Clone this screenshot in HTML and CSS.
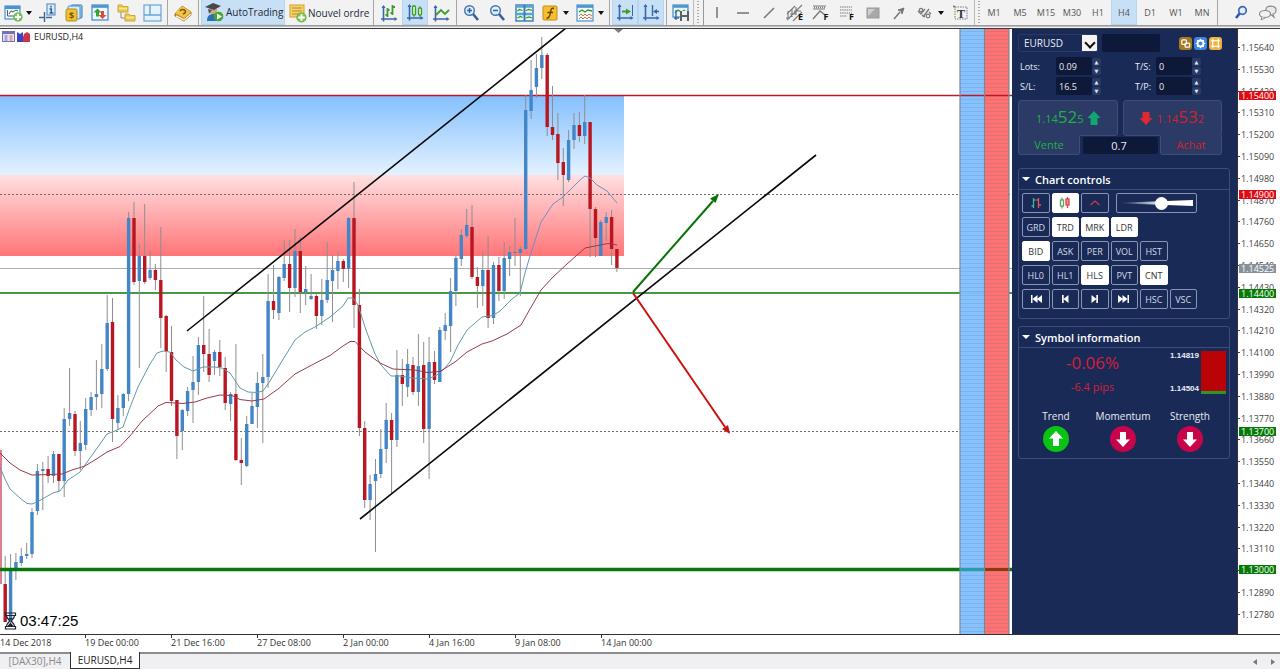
FILE: index.html
```html
<!DOCTYPE html>
<html lang="fr">
<head>
<meta charset="utf-8">
<title>EURUSD,H4</title>
<link rel="stylesheet" href="styles.css">
</head>
<body>
<svg class="defs" aria-hidden="true">
  <symbol id="plus" viewBox="0 0 10 10"><circle cx="5" cy="5" r="4.6" fill="#58a63a"/><circle cx="5" cy="5" r="4" fill="#7cc655"/><path d="M5 2v6M2 5h6" stroke="#fff" stroke-width="1.8"/></symbol>
  <symbol id="axes" viewBox="0 0 20 20"><path d="M4.500 3v15.500M2 16h15" stroke="#3a66ae" stroke-width="1.600" fill="none"/><path d="M2.500 5l2-3 2 3zM15.500 14l3 2-3 2z" fill="#3a66ae"/></symbol>
</svg>

<header class="toolbar">
  <button class="tool menu" aria-label="Nouveau graphique"><svg viewBox="0 0 20 20"><rect x="2" y="3" width="15" height="13" fill="#eff7fd" stroke="#4a93d0" stroke-width="1.200"/><path d="M2 4.500h15" stroke="#4a93d0" stroke-width="3"/><path d="M4.500 7v6h10M6 11l2-3 2 1 3-2 2 1" fill="none" stroke="#555f68"/><use href="#plus" x="10" y="9" width="10" height="10"/></svg></button>
  <button class="tool" aria-label="Réticule"><svg viewBox="0 0 20 20"><path d="M6.500 9v10M1 14.500h5M8 14.500h6" stroke="#3f6496" stroke-width="1.400"/><rect x="9" y="1" width="8" height="11" fill="#d8ecfa" stroke="#4f82bf"/><path d="M11.500 6h1.800v4M11.500 10h4M13 2.800v1.700" fill="none" stroke="#2c5f9f" stroke-width="1.500"/></svg></button>
  <button class="tool" aria-label="Cotations"><svg viewBox="0 0 20 20"><rect x="7" y="2" width="11" height="13" rx="1" fill="#9ed0f0" stroke="#337cba"/><rect x="4" y="3" width="12" height="13" rx="1" fill="#d5ecfa" stroke="#4b92cc"/><rect x="2" y="6" width="11" height="12" rx="1.500" fill="#eec033" stroke="#b48a1b"/><text x="7.500" y="15.500" text-anchor="middle" class="glyph coin">$</text></svg></button>
  <button class="tool" aria-label="Navigateur"><svg viewBox="0 0 20 20"><rect x="2" y="2" width="16" height="15" fill="#eff7fd" stroke="#4a93d0" stroke-width="1.300"/><path d="M2 3.500h16" stroke="#4a93d0" stroke-width="2.600"/><path d="M7.500 5.500l4 4H9v4H6v-4H3.500z" fill="#39a431"/><path d="M12.500 16l-4-4H11V8h3v4h2.500z" fill="#df4b36"/></svg></button>
  <button class="tool" aria-label="Dossiers"><svg viewBox="0 0 20 20"><path d="M5 9v6h5" stroke="#888" fill="none"/><path d="M2 2h4l1 1.500h5V9H2zM9 11h4l1 1.500h5V18H9z" fill="#eac84f" stroke="#c9a644"/><path d="M3 5.500h8M10 14.500h8" stroke="#fae98d" stroke-width="1.500"/></svg></button>
  <button class="tool" aria-label="Terminal"><svg viewBox="0 0 20 20"><rect x="2" y="2" width="17" height="16" fill="#e4f2fb" stroke="#69a5d5" stroke-width="1.200"/><path d="M2 12h17M8 2v10" stroke="#69a5d5" stroke-width="1.500"/></svg></button>
  <i class="sep"></i>
  <button class="tool" aria-label="Éditeur"><svg viewBox="0 0 20 20"><path d="M2 11l7-8 9 6v3l-7 6-9-5z" fill="#c58d1a" stroke="#9b7220"/><path d="M2 10l7-7 9 6-7 6z" fill="#f0c34b"/><path d="M3 13l8 4 7-6" fill="none" stroke="#f6f0dd" stroke-width="1.400"/><path d="M7 8c2-3 7-1 5 2l-2 1" fill="none" stroke="#805908" stroke-width="1.600"/></svg></button>
  <i class="sep"></i>
  <button class="tool wide on auto"><svg viewBox="0 0 20 20"><path d="M3 19c0-6 3-7 7-7s5 2 5 7z" fill="#2d6fb5"/><circle cx="9" cy="8" r="4" fill="#d3a675"/><path d="M1 5l8-4 8 3-7 4z" fill="#444a50"/><path d="M4 7l1 5 3-4" fill="#555"/><circle cx="14.500" cy="14.500" r="4.800" fill="#41a72f"/><path d="M13 11.500l5 3-5 3z" fill="#fff"/></svg>AutoTrading</button>
  <button class="tool wide order"><svg viewBox="0 0 20 20"><rect x="2" y="2" width="14" height="12" fill="#f6d469" stroke="#d1a02b"/><path d="M4 5h10M4 8h10M4 11h7" stroke="#b4862d" stroke-width="1.200"/><use href="#plus" x="8" y="9" width="11" height="11"/></svg>Nouvel ordre</button>
  <i class="sep"></i>
  <button class="tool" aria-label="Barres"><svg viewBox="0 0 20 20"><use href="#axes"/><path d="M8.500 5v9M6.500 12h2M8.500 7h2M13.500 2v10M11.500 10h2M13.500 4h2.500" stroke="#3d9d2c" stroke-width="1.800"/></svg></button>
  <button class="tool on" aria-label="Chandeliers"><svg viewBox="0 0 20 20"><use href="#axes"/><path d="M9 3v12M15 4v11" stroke="#3d9d2c"/><rect x="7.500" y="4" width="3" height="9" rx="1" fill="#d8f3d0" stroke="#3d9d2c" stroke-width="1.300"/><rect x="13.500" y="6" width="3" height="7" rx="1" fill="#d8f3d0" stroke="#3d9d2c" stroke-width="1.300"/></svg></button>
  <button class="tool" aria-label="Ligne"><svg viewBox="0 0 20 20"><use href="#axes"/><path d="M5 12l5-5 4 4 4-4" fill="none" stroke="#3d9d2c" stroke-width="1.800"/></svg></button>
  <i class="sep"></i>
  <button class="tool" aria-label="Agrandir"><svg viewBox="0 0 20 20"><path d="M11 11l5 6" stroke="#3a5e9a" stroke-width="2.600"/><circle cx="7.500" cy="7.500" r="4.800" fill="#e0f0fb" stroke="#4474b5" stroke-width="1.400"/><path d="M5 7.500h5M7.500 5v5" stroke="#33609f" stroke-width="1.500"/></svg></button>
  <button class="tool" aria-label="Réduire"><svg viewBox="0 0 20 20"><path d="M11 11l5 6" stroke="#3a5e9a" stroke-width="2.600"/><circle cx="7.500" cy="7.500" r="4.800" fill="#e0f0fb" stroke="#4474b5" stroke-width="1.400"/><path d="M5 7.500h5" stroke="#33609f" stroke-width="1.500"/></svg></button>
  <button class="tool" aria-label="Mosaïque"><svg viewBox="0 0 20 20"><rect x="2" y="2" width="17" height="16" fill="#e8f7e9" stroke="#367db9" stroke-width="1.400"/><path d="M2 3.500h17M2 11h17" stroke="#5ba4db" stroke-width="2.600"/><path d="M10.500 2v16" stroke="#367db9" stroke-width="2"/><path d="M3.500 8l2-1.500 3 1M12 7.500l3-1 3 1M3.500 15l3-1.500 2 1M12 15l3-1 3 1" stroke="#38912c" stroke-width="1.200" fill="none"/></svg></button>
  <button class="tool menu" aria-label="Indicateurs"><svg viewBox="0 0 20 20"><rect x="3" y="3" width="14" height="14" rx="1" fill="#f5bf2f" stroke="#c58b19"/><path d="M14 5.500c-3-1-3 1-3.500 4S9 15.500 6.500 15M7.500 9.500h5.500" fill="none" stroke="#6b4306" stroke-width="1.400"/></svg></button>
  <button class="tool menu" aria-label="Modèles"><svg viewBox="0 0 20 20"><rect x="2" y="2" width="16" height="16" fill="#f2faf6" stroke="#4a93d0" stroke-width="1.200"/><path d="M2 3.500h16" stroke="#4a93d0" stroke-width="2.600"/><path d="M4 9l3-2 3 2 3-2 4 1" fill="none" stroke="#38912c" stroke-width="1.300"/><path d="M4 13l2-2 2 2 2-2 2 2 2-2 3 2M4 16l2-2 2 2 2-2 2 2 2-2 3 2" fill="none" stroke="#c56f5d"/></svg></button>
  <i class="sep"></i>
  <button class="tool on" aria-label="Défilement"><svg viewBox="0 0 20 20"><use href="#axes"/><path d="M17.500 3v11" stroke="#3a66ae"/><path d="M7 9.500h5" stroke="#3d9d2c" stroke-width="2"/><path d="M11 6.500l5 3-5 3z" fill="#3d9d2c"/></svg></button>
  <button class="tool on" aria-label="Décalage"><svg viewBox="0 0 20 20"><use href="#axes"/><path d="M11.500 3v11M14 9.500h4" stroke="#3a66ae" stroke-width="1.400"/><path d="M16 7l-4 2.500 4 2.500z" fill="#3a66ae"/></svg></button>
  <i class="sep"></i>
  <button class="tool slim" aria-label="Enregistrer"><svg viewBox="0 0 20 20"><rect x="2" y="2" width="15" height="12" fill="#e9f6f2" stroke="#4a93d0" stroke-width="1.300"/><path d="M2 3.500h15" stroke="#4a93d0" stroke-width="2.500"/><path d="M4 10l3-3 3 2 4-2" fill="none" stroke="#38912c" stroke-width="1.300"/><path d="M5 7v10M3 15h5" stroke="#3a66ae" stroke-width="1.400"/><path d="M9 8h9v10H9z" fill="#58626b"/><path d="M11 8h5v4h-5zM11 14h5v4h-5z" fill="#edf1f3"/></svg></button>
  <i class="grip"></i>
  <button class="tool gray" aria-label="Ligne verticale"><svg viewBox="0 0 20 20"><path d="M10 4v11" /></svg></button>
  <button class="tool gray" aria-label="Ligne horizontale"><svg viewBox="0 0 20 20"><path d="M4 10h12"/></svg></button>
  <button class="tool gray" aria-label="Ligne de tendance"><svg viewBox="0 0 20 20"><path d="M5 15L15 5"/></svg></button>
  <button class="tool gray" aria-label="Canal équidistant"><svg viewBox="0 0 20 20"><path d="M2 17L17 2M2 11l8-8M8 18l9-9M3 8v8M7 6v8M11 4v8M1 15h4M5 11h6M9 8h7" stroke-width="1.100"/><text x="15.500" y="17" text-anchor="middle" class="glyph">E</text></svg></button>
  <button class="tool gray" aria-label="Éventail de Fibonacci"><svg viewBox="0 0 20 20"><path d="M2 3h13M2 6h12" stroke-width="1.200"/><path d="M2 16l7-8 5 4" stroke-width="1.400"/><path d="M3 4.500h12" stroke-dasharray="1 1"/><text x="15" y="17" text-anchor="middle" class="glyph">F</text></svg></button>
  <button class="tool gray" aria-label="Retracement de Fibonacci"><svg viewBox="0 0 20 20"><path d="M3 4h12M3 7h12M3 10h12M3 13h7" stroke-width="1.200" stroke-dasharray="1.500 .7"/><text x="14.500" y="17" text-anchor="middle" class="glyph">F</text></svg></button>
  <button class="tool gray" aria-label="Rectangle"><svg viewBox="0 0 20 20"><rect x="4" y="5" width="12" height="10" fill="#a9a9a9" stroke="#999" stroke-width="1"/><path d="M5 6h7l-7 7z" fill="#cfcfcf" stroke="none"/></svg></button>
  <button class="tool gray" aria-label="Flèche"><svg viewBox="0 0 20 20"><path d="M5 16l6-7"/><path d="M9 7l6-2-2 6-1-3z" fill="#777" stroke-width="1"/></svg></button>
  <button class="tool gray menu" aria-label="Formes"><svg viewBox="0 0 20 20"><path d="M3 8l3 3 4-5M8 14l6-8" stroke-width="1.400"/><circle cx="6" cy="7" r="1.700" stroke-width="1.200"/><circle cx="13" cy="13" r="1.800" stroke-width="1.200"/><path d="M14 9l2 2M7 12l3 2" stroke-width="1.200"/></svg></button>
  <button class="tool gray" aria-label="Texte"><svg viewBox="0 0 20 20"><rect x="5" y="4" width="12" height="12" stroke-width="1" stroke-dasharray="1.500 1"/><text x="11" y="14.500" text-anchor="middle" class="glyph serif">T</text><circle cx="4" cy="3.500" r="1" stroke="none" fill="#666"/></svg></button>
  <i class="grip short"></i>
  <nav class="frames">
    <button class="tool">M1</button><button class="tool">M5</button><button class="tool">M15</button><button class="tool">M30</button><button class="tool">H1</button><button class="tool on">H4</button><button class="tool">D1</button><button class="tool">W1</button><button class="tool">MN</button>
  </nav>
  <i class="sep end"></i>
  <button class="tool last" aria-label="Rechercher"><svg viewBox="0 0 20 20"><path d="M9 10l-4 5" stroke="#2856b5" stroke-width="2.600"/><circle cx="11.500" cy="7.500" r="3.800" fill="#e4edfa" stroke="#3b67bd" stroke-width="1.700"/></svg></button>
  <button class="tool" aria-label="Messages"><svg viewBox="0 0 20 20"><path d="M9 6c0-4 10-4 10 1 0 3-2 4-3 4l1 3-4-3H9z" fill="#e9e9e9" stroke="#8b8b8b" stroke-width="1.200"/><ellipse cx="8" cy="11" rx="5.500" ry="3.500" fill="#f2f2f2" stroke="#8b8b8b" stroke-width="1.200"/><path d="M5 14l-1 3 4-2" fill="#f2f2f2" stroke="#8b8b8b"/></svg></button>
</header>

<main class="workspace">
  <section class="chart" aria-label="Graphique EURUSD H4">
    <svg class="plot" viewBox="0 29 1012 605" preserveAspectRatio="none">
      <defs>
        <linearGradient id="zoneBlue" x1="0" y1="0" x2="0" y2="1"><stop offset="0" stop-color="#84c0fe"/><stop offset="1" stop-color="#e4f2ff"/></linearGradient>
        <linearGradient id="zoneRed" x1="0" y1="0" x2="0" y2="1"><stop offset="0" stop-color="#ffe0e1"/><stop offset="1" stop-color="#ff7578"/></linearGradient>
        <pattern id="stripes" width="4" height="4" patternUnits="userSpaceOnUse"><path d="M0 3.500h4" stroke="#5b6b8c" stroke-opacity=".18"/></pattern>
      </defs>
      <rect x="0" y="96" width="624" height="79" fill="url(#zoneBlue)"/>
      <rect x="0" y="175" width="624" height="81" fill="url(#zoneRed)"/>
      <path d="M0 194.500h1012M0 431.500h1012" stroke="#7d6668" stroke-dasharray="2 2"/>
      <path d="M0 268.500h1012" stroke="#aab0b2"/>
      <path d="M0 293h1012" stroke="#0a740a" stroke-width="1.600"/>
      <path d="M0 95.500h1012" stroke="#bb1824" stroke-width="1.600"/>
      <path d="M1 450v134" stroke="#dc7f90" stroke-width="2"/>
      <g id="candles"></g>
      <path fill="none" stroke="#6299a8" d="M0 467L5 479 10 489 20 498 27 503.500 32 504 37 502 53 493 60 491 68 480 80 472 90 458 100 444 107 434 115 431 123 427 129 410 138 387 150 364 157 353 163 351 170 352 176 360 184 367 193 371 203 367 215 367 222 368 230 373 240 388 248 392 257 392.500 263 391 270 381 282 361 295 340 305 332 315 327 330 317 343 306 348 298 353 298 358 305 366 330 375 354 381 365 391 376 400 376 412 378 428 379 437 375 443 370 450 362 458 345 467 330 482 317 493 315.500 500 311 512 299 520 293 525 273"/>
      <path fill="none" stroke="#6d8fcd" d="M525 273L530 256 541 222 553 204 563 197 572 188 580 180 585 176 590 178 597 185 607 191 617 203"/>
      <path fill="none" stroke="#963c48" d="M0 453L10 463 20 470 32 475 50 474.500 62 474 72 470 85 466 98 458 107 452 120 446.500 130 436 142 421 158 406 166 402.500 183 403.500 195 402 207 398 220 395 232 395.500 240 399.500 252 401 264 399 278 389 295 374 310 366 330 355.500 343 346 350 341.500 355 341.500 365 352 380 363 393 369 415 370 427 372.500 440 371.500 455 362 467 352 482 344 492 341 507 334 521 325 530 309 541 290 553 277 567 264 585 248 595 246 608 243.500 617 245"/>
      <path d="M0 569.500h1012" stroke="#08780c" stroke-width="3.400"/>
      <path d="M187 331L566 28M360 519L816 155" stroke="#0a0a0a" stroke-width="1.600"/>
      <path d="M633 292l80-91" stroke="#067306" stroke-width="2"/><path d="M719 194l-3.500 9-5.500-4.500z" fill="#067306"/>
      <path d="M633 293l92 134" stroke="#cd1010" stroke-width="2"/><path d="M730 434l-8-5 6-4z" fill="#cd1010"/>
      <path d="M614 29h9l-4.500 4z" fill="#808080"/>
      <rect x="960" y="28" width="24" height="606" fill="#80c0ff" fill-opacity=".96"/>
      <rect x="985" y="28" width="24" height="606" fill="#ff7272"/>
      <rect x="960" y="28" width="49" height="606" fill="url(#stripes)"/>
      <path d="M960 95.500h49" stroke="#bb1824" stroke-width="1.600"/>
      <path d="M960 569.500h24" stroke="#25a0aa" stroke-width="3"/><path d="M985 569.500h24" stroke="#8c3a0c" stroke-width="3"/>
      <path d="M960 28v606M984.500 28v606M1009 28v606" stroke="#7a8796" stroke-width="1.200"/>
    </svg>
    <h1 class="caption">
      <svg viewBox="0 0 28 12"><rect x=".5" y=".5" width="12" height="10" fill="#e7e2f2" stroke="#7272b4"/><path d="M1 2h11" stroke="#7272b4" stroke-width="2"/><path d="M2.500 5h3M2.500 7h3M2.500 9h3" stroke="#596dc7"/><path d="M7.500 5h3M7.500 7h3M7.500 9h3" stroke="#dc655f"/><path d="M15 1l3 2 3-2v10h-6z" fill="#3a42c6"/><path d="M22 3l3-2 3 2v8h-7V6z" fill="#cf3444"/></svg>
      EURUSD,H4
    </h1>
    <div class="timer">
      <svg viewBox="0 0 12 18"><path d="M1 1h10v2.500H1zM1 14.500h10V17H1zM2 3.500c0 3 3 4 3 5.500s-3 2-3 5.500M10 3.500c0 3-3 4-3 5.500s3 2 3 5.500" fill="none" stroke="#1c2230" stroke-width="1.200"/><path d="M3 14l3-3.500L9 14zM4 6h4L6 8z" fill="#1c2230"/></svg>
      <time>03:47:25</time>
    </div>
  </section>

  <aside class="panel">
    <form class="ticket">
      <div class="line first">
        <select class="symbol" aria-label="Symbole"><option>EURUSD</option></select>
        <input class="field search" aria-label="Commentaire">
        <div class="badges">
          <button type="button" class="badge brown" aria-label="Copier"><svg viewBox="0 0 14 14"><rect x="3" y="3" width="5" height="5" rx="1"/><rect x="6.500" y="6.500" width="5" height="4.500" rx="1"/></svg></button>
          <button type="button" class="badge blue" aria-label="Réglages"><svg viewBox="0 0 14 14"><circle cx="7" cy="7" r="3.200" stroke-width="2"/><path d="M7 1.800v2M7 10.200v2M1.800 7h2M10.200 7h2M3.300 3.300l1.200 1.200M9.500 9.500l1.200 1.200M3.300 10.700l1.200-1.200M9.500 4.500l1.200-1.200"/></svg></button>
          <button type="button" class="badge amber" aria-label="Agrandir"><svg viewBox="0 0 14 14"><rect x="4" y="4" width="6" height="6"/><path d="M4 2v2H2M10 2v2h2M4 12v-2H2M10 12v-2h2" stroke-width="1.200"/></svg></button>
        </div>
      </div>
      <div class="line">
        <label for="lots">Lots:</label><input class="field" id="lots" value="0.09"><span class="spin"><button type="button" aria-label="Lots plus">▲</button><button type="button" aria-label="Lots moins">▼</button></span>
        <label for="ts" class="second">T/S:</label><input class="field" id="ts" value="0"><span class="spin"><button type="button" aria-label="T/S plus">▲</button><button type="button" aria-label="T/S moins">▼</button></span>
      </div>
      <div class="line">
        <label for="sl">S/L:</label><input class="field" id="sl" value="16.5"><span class="spin"><button type="button" aria-label="S/L plus">▲</button><button type="button" aria-label="S/L moins">▼</button></span>
        <label for="tp" class="second">T/P:</label><input class="field" id="tp" value="0"><span class="spin"><button type="button" aria-label="T/P plus">▲</button><button type="button" aria-label="T/P moins">▼</button></span>
      </div>
      <div class="deal">
        <button type="button" class="side sell"><span class="quote"><span class="price"><small>1.14</small>52<small>5</small></span><svg viewBox="0 0 12 14"><path d="M6 0l6.500 7H9.500V14h-7V7H-.5z"/></svg></span><span class="verb">Vente</span></button>
        <button type="button" class="side buy"><span class="quote"><svg viewBox="0 0 12 14"><path d="M6 14L-.5 7h3V1h7v6h3z"/></svg><span class="price"><small>1.14</small>53<small>2</small></span></span><span class="verb">Achat</span></button>
        <input class="field spread" aria-label="Spread" value="0.7">
      </div>
    </form>

    <section class="card">
      <h2>Chart controls</h2>
      <div class="keys">
        <button aria-label="Barres"><svg viewBox="0 0 14 14"><path d="M4.500 2v10M2.500 10h2M4.500 4h2" stroke="#45b28b"/><path d="M9.500 2v10M7.500 4h2M9.500 9h2.500" stroke="#e0565b"/></svg></button>
        <button class="lit" aria-label="Chandeliers"><svg viewBox="0 0 14 14"><path d="M4 1.500v11" stroke="#58a565"/><rect x="2.500" y="4" width="3" height="6" fill="#fff" stroke="#58a565"/><path d="M9.500 1v11" stroke="#dd4448"/><rect x="8" y="3" width="3" height="6" fill="#f29a9a" stroke="#dd4448"/></svg></button>
        <button aria-label="Ligne"><svg viewBox="0 0 14 14"><path d="M2.500 9L7 5l4.500 4" stroke="#d23a45"/></svg></button>
        <label class="zoom"><input type="range" min="0" max="100" value="58" aria-label="Zoom"></label>
        <button class="row">GRD</button><button class="lit">TRD</button><button class="lit">MRK</button><button class="lit">LDR</button>
        <button class="row lit">BID</button><button>ASK</button><button>PER</button><button>VOL</button><button>HST</button>
        <button class="row">HL0</button><button>HL1</button><button class="lit">HLS</button><button>PVT</button><button class="lit">CNT</button>
        <button class="row" aria-label="Début"><svg viewBox="0 0 14 14"><path class="fill" d="M2 3h1.500v8H2zM8.500 3v8l-5-4zM13 3v8L8 7z"/></svg></button>
        <button aria-label="Précédent"><svg viewBox="0 0 14 14"><path class="fill" d="M4 3h1.700v8H4zM10.500 3v8L5.500 7z"/></svg></button>
        <button aria-label="Suivant"><svg viewBox="0 0 14 14"><path class="fill" d="M10 3H8.300v8H10zM3.500 3v8l5-4z"/></svg></button>
        <button aria-label="Fin"><svg viewBox="0 0 14 14"><path class="fill" d="M12 3h-1.500v8H12zM5.500 3v8l5-4zM1 3v8l5-4z"/></svg></button>
        <button>HSC</button><button>VSC</button>
      </div>
    </section>

    <section class="card info">
      <h2>Symbol information</h2>
      <div class="change">
        <div class="delta"><strong>-0.06%</strong><span>-6.4 pips</span></div>
        <div class="range"><span>1.14819</span><span>1.14504</span></div>
        <div class="gauge"></div>
      </div>
      <div class="signals">
        <figure><figcaption>Trend</figcaption><svg class="up" viewBox="0 0 26 26"><circle cx="13" cy="13" r="13"/><path d="M13 5l7 7.500h-4V20h-6v-7.500H6z"/></svg></figure>
        <figure><figcaption>Momentum</figcaption><svg viewBox="0 0 26 26"><circle cx="13" cy="13" r="13"/><path d="M13 21l-7-7.500h4V6h6v7.500h4z"/></svg></figure>
        <figure><figcaption>Strength</figcaption><svg viewBox="0 0 26 26"><circle cx="13" cy="13" r="13"/><path d="M13 21l-7-7.500h4V6h6v7.500h4z"/></svg></figure>
      </div>
    </section>
  </aside>

  <div class="scale"><ol id="prices"></ol></div>
</main>

<div class="dates"><span class="start">14 Dec 2018</span><span>19 Dec 00:00</span><span>21 Dec 16:00</span><span>27 Dec 08:00</span><span>2 Jan 00:00</span><span>4 Jan 16:00</span><span>9 Jan 08:00</span><span>14 Jan 00:00</span></div>

<footer class="tabs">
  <a href="#dax">[DAX30],H4</a><a href="#eurusd" class="current">EURUSD,H4</a>
  <div class="arrows"><button aria-label="Gauche"><svg viewBox="0 0 6 8"><path d="M5 1v6L1 4z"/></svg></button><button aria-label="Droite"><svg viewBox="0 0 6 8"><path d="M1 1v6l4-3z"/></svg></button></div>
</footer>
<script src="app.js"></script>
</body>
</html>
```

FILE: styles.css
```css
* { box-sizing: border-box; }
body {
  margin: 0;
  min-height: 100vh;
  display: flex;
  flex-direction: column;
  background: #fff;
  color: #222;
  font-family: "Open Sans", "Noto Sans", sans-serif;
  font-size: 10px;
}
button, input, select { font: inherit; color: inherit; margin: 0; padding: 0; border: 0; background: none; }
.defs { position: absolute; width: 0; height: 0; }

/* Toolbar */
.toolbar {
  display: flex;
  height: 29px;
  padding-bottom: 4px;
  background: linear-gradient(#f1f2f1 25px, #8b8d8f 25px, #c9cacb 27px, #f5f5f5 27px, #f5f5f5 28px, #3b3b3f 28px);
}
.tool {
  flex: none;
  width: 26px;
  display: flex;
  align-items: center;
  justify-content: center;
  white-space: nowrap;
}
.tool svg { width: 20px; height: 20px; flex: none; }
.tool.on { background: #c8e0f5; border: 1px solid #b4d5f0; border-top: 0; }
.tool.slim { width: 24px; }
.tool.menu { width: 35px; justify-content: flex-start; padding-left: 3px; }
.tool.menu::after { content: ""; margin-left: 3px; border: 3px solid transparent; border-top: 4px solid #111; border-bottom: 0; }
.tool.wide { justify-content: flex-start; gap: 2px; padding-left: 2px; color: #1d2a3a; }
.tool.auto { width: 84px; }
.tool.order { width: 86px; padding-left: 3px; gap: 0; }
.gray svg { fill: none; stroke: #7a7a7a; stroke-width: 1.6; }
.glyph { font: bold 9px "Open Sans", sans-serif; fill: #111; stroke: none; }
.coin { fill: #7a5505; }
.serif { font-family: "Liberation Serif", serif; font-size: 12px; fill: #333; }
.sep { flex: none; width: 5px; background: linear-gradient(90deg, transparent 2px, #a5a5a5 2px, #a5a5a5 3px, transparent 3px); }
.grip { flex: none; width: 11px; border-left: 1px solid #bbb; border-right: 1px solid #999; background: radial-gradient(circle, #aaa 1px, transparent 1px) 0 0 / 8px 3px; }
.grip.short { width: 7px; margin-left: 1px; border-right: 0; }
.frames { display: flex; color: #555; font-size: 9px; }
.sep.end { width: 3px; }
.tool.last { margin-left: auto; }

/* Chart */
.workspace { flex: 1; display: flex; min-height: 0; border-bottom: 1px solid #333; }
.chart { flex: 1; position: relative; min-width: 0; }
.plot { position: absolute; inset: 0; width: 100%; height: 100%; }
.candle line { stroke: #8e8e8e; }
.candle rect { fill: #4286c8; }
.candle.down rect { fill: #b81620; }
.caption { position: absolute; left: 2px; top: 2px; margin: 0; display: flex; align-items: center; gap: 4px; font-size: 9px; line-height: 12px; font-weight: 400; }
.caption svg { width: 28px; height: 12px; }
.timer { position: absolute; left: 4px; bottom: 4px; display: flex; align-items: center; gap: 3px; font: 15px/18px "Liberation Sans", sans-serif; color: #000; }
.timer svg { width: 13px; height: 18px; }

/* Price scale */
.scale { flex: none; width: 43px; position: relative; border-left: 1px solid #333; padding: 14px 0 15px; font: 9px/9px "Open Sans", sans-serif; color: #444; display: flex; }
.scale ol { list-style: none; margin: 0; padding: 0; flex: 1; display: flex; flex-direction: column; justify-content: space-between; }
.scale li { display: flex; align-items: center; }
.scale li::before { content: ""; width: 2px; height: 1px; margin-right: 1px; background: #444; }
.tag { position: absolute; left: 1px; width: 37px; padding-left: 2px; margin-top: -4px; color: #fff; }
.tag.red { background: #e00b12; }
.tag.green { background: #067a06; }
.tag.slate { background: #87919b; }

/* Side panel */
.panel { flex: none; width: 225px; padding: 4px 7px 4px 6px; background: #192a56; color: #e9edf5; }
.ticket { display: flex; flex-direction: column; gap: 2px; padding-right: 8px; font-size: 9px; }
.line { display: flex; align-items: center; height: 18px; }
.line.first { position: relative; height: 20px; margin-bottom: 2px; font-size: 10px; }
.line label { width: 38px; padding-left: 2px; }
.line label.second { width: 22px; margin-left: 33px; padding-left: 1px; }
.field { width: 36px; height: 18px; padding-left: 3px; background: #0e1838; border-radius: 2px; }
.symbol {
  width: 80px; height: 18px; padding-left: 5px; appearance: none; border: 1px solid #2b3a63; border-radius: 2px;
  background: linear-gradient(#f4f4f4, #f4f4f4) right / 15px 100% no-repeat;
}
.line.first::after { content: ""; position: absolute; left: 68px; top: 6px; width: 6px; height: 6px; border: solid #111; border-width: 0 2px 2px 0; transform: rotate(45deg); pointer-events: none; }
.search { width: 58px; margin-left: 4px; }
.badges { margin-left: auto; display: flex; gap: 2px; }
.badge { width: 13px; height: 13px; border-radius: 3px; display: flex; }
.badge svg { width: 13px; height: 13px; fill: none; stroke: #fff; stroke-width: 1.3; }
.brown { background: #a87a20; }
.blue { background: #3f83dd; }
.amber { background: #eeb23c; }
.spin { display: flex; flex-direction: column; gap: 1px; width: 9px; }
.spin button { height: 8px; background: #2a3a66; font: 5px/8px "DejaVu Sans", sans-serif; color: #dfe6f5; border-radius: 2px; }
.deal { display: grid; grid-template-columns: 1fr 1fr; gap: 5px; position: relative; margin-top: 3px; }
.side { display: flex; flex-direction: column; align-items: flex-start; }
.side.buy { align-items: flex-end; color: #d3202b; }
.sell { color: #1fb141; }
.quote { width: 100%; height: 36px; display: flex; align-items: center; justify-content: center; gap: 4px; background: #2b3b66; border: 1px solid #3d4d79; border-radius: 3px; }
.quote svg { width: 12px; height: 14px; overflow: visible; }
.sell svg { fill: #12a673; }
.buy svg { fill: #e02832; }
.price { font-size: 17px; line-height: 24px; }
.price small { font-size: 11px; }
.verb { width: 62px; height: 20px; margin-top: -1px; font-size: 11px; line-height: 18px; background: #2b3b66; border: 1px solid #3d4d79; border-top-color: #2b3b66; border-radius: 0 0 3px 3px; }
.spread { position: absolute; left: 65px; right: 64px; bottom: 1px; width: calc(100% - 129px); height: 17px; padding: 0 3px 0 0; text-align: center; font-size: 11px; }

.card { margin-top: 13px; border: 1px solid #3c4d7b; border-radius: 3px; padding-bottom: 9px; }
.card h2 { margin: 0; height: 21px; display: flex; align-items: center; gap: 5px; padding-left: 3px; border-bottom: 1px solid #3c4d7b; font-size: 11px; font-weight: 600; color: #fff; }
.card h2::before { content: ""; border: 4px solid transparent; border-top-color: #fff; border-bottom: 0; }
.keys { display: grid; grid-template-columns: repeat(6, 1fr); grid-auto-rows: 20px; gap: 4px 2px; width: 178px; padding: 3px 0 0 3px; }
.keys button { display: flex; align-items: center; justify-content: center; border: 1px solid #8995b4; border-radius: 2px; font-size: 9px; color: #d5dbe8; }
.keys .row { grid-column: 1; }
.keys .lit { background: #fff; border-color: #fff; color: #333; }
.keys svg { width: 14px; height: 14px; fill: none; stroke-width: 1.3; }
.keys .fill { fill: #fff; }
.zoom { grid-column: 4 / 7; margin-left: 5px; border: 1px solid #8995b4; border-radius: 2px; position: relative; display: flex; align-items: center; padding: 0 3px; }
.zoom::before { content: ""; position: absolute; inset: 6px 3px; background: linear-gradient(90deg, #192a56, #fff 60%); clip-path: polygon(0 45%, 100% 0, 100% 100%, 0 55%); }
.zoom input { position: relative; appearance: none; width: 100%; height: 14px; }
.zoom input::-webkit-slider-thumb { appearance: none; width: 13px; height: 13px; border-radius: 50%; background: #fff; }

.info { margin-top: 7px; padding-bottom: 6px; }
.change { display: flex; padding: 3px 3px 0 0; height: 46px; }
.delta { flex: 1; display: flex; flex-direction: column; align-items: center; color: #d3203c; padding-right: 4px; }
.delta strong { font-size: 17px; line-height: 24px; font-weight: 400; }
.delta span { font-size: 11px; line-height: 24px; }
.range { display: flex; flex-direction: column; justify-content: space-between; padding-right: 2px; font: bold 8px/10px "Liberation Sans", sans-serif; }
.gauge { width: 25px; background: linear-gradient(#b90306 40px, #2a9826 40px); }
.signals { display: grid; grid-template-columns: repeat(3, 67px); justify-content: center; margin: 14px 2px 0 0; font-size: 10px; }
.signals figure { margin: 0; display: flex; flex-direction: column; align-items: center; gap: 2px; line-height: 16px; }
.signals svg { width: 26px; height: 26px; fill: #fff; }
.signals circle { fill: #c8044b; }
.signals .up circle { fill: #0bc315; }

/* Dates and tabs */
.dates { display: flex; height: 17px; font: 9px/15px "Open Sans", sans-serif; color: #333; }
.dates span { width: 86px; white-space: nowrap; background: linear-gradient(#333, #333) 0 0 / 1px 3px no-repeat; }
.dates .start { width: 85px; background: none; }
.tabs { display: flex; height: 17px; border-top: 2px solid #8d8d90; background: #f0eff1; font-size: 10px; line-height: 15px; }
.tabs a { width: 70px; text-align: center; color: #8a8a8a; text-decoration: none; }
.tabs .current { height: 17px; margin-top: -2px; padding-top: 1px; background: #fff; color: #222; border: 1px solid #333; border-top: 0; }
.arrows { margin-left: auto; display: flex; gap: 12px; padding-right: 4px; align-items: center; }
.arrows svg { width: 6px; height: 8px; display: block; fill: #777; }
```

FILE: app.js
```js
// Each candle: [high, body top, body bottom, low, 1 when falling], in plot units.
const candles = [
  [556,584,622,622,1],[554,570,622,625],[553,562,568,580],[548,556,563,566],[543,554,556,559],[508,512,554,558],
  [464,471,511,515],[462,469,471,510],[456,469,476,483,1],[451,454,476,483],[454,454,481,491,1],[408,419,481,497],
  [368,413,419,426],[411,414,451,456,1],[421,443,451,470],[398,409,445,450],[392,397,410,416],[360,394,397,410],
  [344,369,394,408],[295,323,369,371],[298,322,419,442,1],[395,408,423,430],[393,394,408,416],[212,218,394,401],
  [202,218,282,285,1],[244,256,281,368],[204,256,282,284,1],[251,270,278,280],[264,270,280,290,1],[227,280,318,348,1],
  [315,316,351,372,1],[326,352,401,406,1],[400,400,436,459,1],[409,410,431,450],[387,391,411,416],[356,382,390,423],
  [337,345,382,395],[296,345,354,372,1],[329,354,375,382,1],[350,352,361,375],[340,352,367,376,1],[357,368,403,410,1],
  [392,394,404,421],[344,394,460,461,1],[438,460,463,485,1],[416,424,466,467],[393,406,424,424],[372,383,407,428],
  [354,377,383,443],[274,301,377,388],[265,301,310,319,1],[276,277,313,320],[240,264,278,281],[240,264,288,312,1],
  [229,251,288,297],[237,251,292,313,1],[266,289,292,305],[274,296,299,300],[293,296,316,329,1],[279,300,316,325],
  [242,280,300,303],[255,270,281,322],[251,261,271,289],[259,261,269,282,1],[217,218,269,288],[182,218,305,328,1],
  [289,305,428,436,1],[421,428,500,508,1],[475,484,500,520],[459,474,481,552],[429,449,474,478],[403,420,449,463],
  [413,420,440,493,1],[350,375,440,447],[359,375,384,406,1],[349,364,387,397],[357,365,392,395,1],[334,366,392,406],
  [342,365,429,443,1],[337,362,429,479],[351,362,380,384,1],[327,330,382,382],[313,325,331,340],[278,291,326,352],
  [256,258,291,306],[229,235,259,266],[209,225,236,238],[205,227,277,279,1],[267,277,286,308,1],[251,270,286,306],
  [236,270,318,328,1],[262,265,318,324],[257,265,291,301,1],[242,258,291,299],[246,252,259,276],[218,252,253,266],
  [246,249,253,296],[95,110,249,250],[60,90,111,119],[54,68,87,98],[37,55,68,79],[53,55,127,136,1],
  [86,127,135,140,1],[113,134,163,180,1],[148,162,175,206,1],[130,140,180,182],[113,125,140,149],[112,125,136,142,1],
  [95,122,136,144],[122,122,209,257,1],[207,209,238,257,1],[220,222,256,256],[212,217,223,241],[210,217,249,265,1],
  [249,249,268,272,1]
];
document.getElementById('candles').innerHTML = candles.map(([high, top, bottom, low, down], i) => {
  const x = (5.2 + i * 5.366).toFixed(1);
  return `<g class="candle${down ? ' down' : ''}"><line x1="${x}" x2="${x}" y1="${high}" y2="${low}"/><rect x="${x - 1.7}" y="${top}" width="3.4" height="${bottom - top}"/></g>`;
}).join('');

// Price scale labels, then the highlighted levels placed over them.
const list = document.getElementById('prices');
for (let i = 0; i < 27; i++) {
  const li = document.createElement('li');
  li.textContent = (1.1564 - i * 0.0011).toFixed(5);
  list.append(li);
}
const levels = [['1.15400', 'red'], ['1.14900', 'red'], ['1.14525', 'slate'], ['1.14400', 'green'], ['1.13700', 'green'], ['1.13000', 'green']];
for (const [price, tone] of levels) {
  const tag = document.createElement('span');
  tag.className = 'tag ' + tone;
  tag.textContent = price;
  tag.style.top = (3.1 + (1.1564 - price) / 0.0286 * 93.4) + '%';
  list.parentElement.append(tag);
}
```
